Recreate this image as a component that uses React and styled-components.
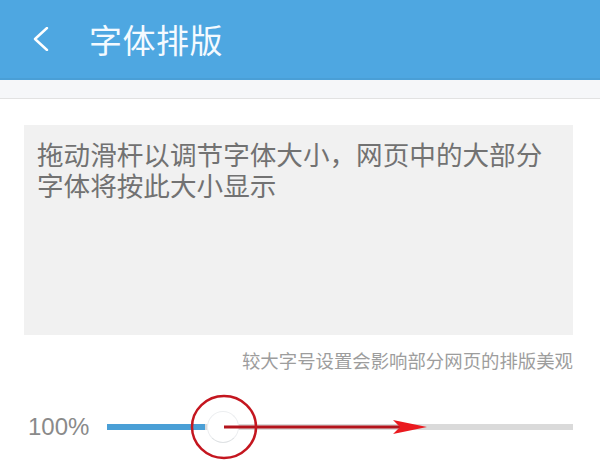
import React from 'react';
import styled, { createGlobalStyle } from 'styled-components';

const GlobalStyle = createGlobalStyle`
  html, body {
    margin: 0;
    padding: 0;
    background: #ffffff;
  }
  body {
    font-family: "Noto Sans CJK SC", "Noto Sans", sans-serif;
  }
`;

const Page = styled.div`
  width: 600px;
  height: 471px;
  overflow: hidden;
  background: #ffffff;
`;

const Header = styled.header`
  height: 80px;
  background: #4ea7e1;
  display: flex;
  align-items: center;
  padding-left: 33px;
  gap: 40px;
  box-sizing: border-box;
  border-bottom: 2px solid #4a9fd6;
`;

const BackIcon = styled.svg`
  width: 16px;
  height: 24px;
  display: block;
`;

const Title = styled.h1`
  margin: 0;
  font-size: 33px;
  font-weight: 400;
  color: #f4faff;
  line-height: 1;
  letter-spacing: 0.5px;
`;

const Strip = styled.div`
  height: 18px;
  background: #f6f7f9;
  border-bottom: 1px solid #e2e2e2;
`;

const Main = styled.main`
  padding: 26px 27px 0 24px;
`;

const Preview = styled.div`
  height: 210px;
  background: #f1f1f1;
  box-sizing: border-box;
  padding: 13px 12px 0 13px;
  font-size: 26.6px;
  line-height: 31px;
  color: #727272;
`;

const PreviewLine = styled.span`
  display: block;
`;

const Hint = styled.p`
  margin: 14px 0 0;
  text-align: right;
  font-size: 18.4px;
  line-height: 22px;
  color: #9d9d9d;
`;

const SliderRow = styled.div`
  display: flex;
  align-items: center;
  margin-top: 21px;
  height: 70px;
`;

const Percent = styled.span`
  width: 83px;
  padding-left: 4px;
  box-sizing: border-box;
  font-family: "Liberation Sans", Arial, sans-serif;
  font-size: 24px;
  color: #8a8a8a;
`;

const TrackArea = styled.div`
  position: relative;
  flex: 1;
  height: 70px;
  display: flex;
  align-items: center;
`;

const Track = styled.div`
  position: relative;
  width: 100%;
  height: 6px;
  background: #dadada;
`;

const Fill = styled.div`
  height: 100%;
  background: #4a9fd6;
`;

const Thumb = styled.div`
  position: absolute;
  top: 50%;
  width: 32px;
  height: 32px;
  margin-left: -16px;
  margin-top: -16px;
  border-radius: 50%;
  background: #ffffff;
  border: 1px solid #eceef0;
  border-bottom-color: #dfe2e4;
  box-sizing: border-box;
`;

const Annotation = styled.svg`
  position: absolute;
  left: 0;
  top: 0;
  width: 100%;
  height: 70px;
  overflow: visible;
  pointer-events: none;
`;

const value = 116;

export default function App() {
  return (
    <Page>
      <GlobalStyle />
      <Header>
        <BackIcon viewBox="0 0 16 24">
          <polyline
            points="14,1 2,12 14,23"
            fill="none"
            stroke="#ffffff"
            strokeWidth="2.4"
            strokeLinecap="round"
            strokeLinejoin="round"
          />
        </BackIcon>
        <Title>字体排版</Title>
      </Header>
      <Strip />
      <Main>
        <Preview>
          <PreviewLine>拖动滑杆以调节字体大小，网页中的大部分</PreviewLine>
          <PreviewLine>字体将按此大小显示</PreviewLine>
        </Preview>
        <Hint>较大字号设置会影响部分网页的排版美观</Hint>
        <SliderRow>
          <Percent>100%</Percent>
          <TrackArea>
            <Track>
              <Fill style={{ width: value - 18 }} />
              <Thumb style={{ left: value }} />
            </Track>
            <Annotation viewBox="0 0 466 70" preserveAspectRatio="none">
              <line x1="117" y1="35" x2="296" y2="35" stroke="#b3141c" strokeWidth="3" />
              <polygon points="286,28 320,35 286,42 293,35" fill="#ea1a1f" />
              <ellipse cx="117" cy="35" rx="32" ry="31" fill="none" stroke="#c4161f" strokeWidth="2.5" />
            </Annotation>
          </TrackArea>
        </SliderRow>
      </Main>
    </Page>
  );
}
